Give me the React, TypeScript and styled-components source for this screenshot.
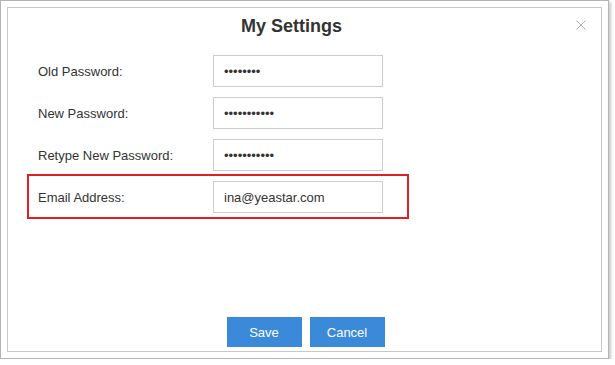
import React from "react";
import styled, { createGlobalStyle } from "styled-components";

const GlobalStyle = createGlobalStyle`
  html, body {
    margin: 0;
    padding: 0;
    background: #ffffff;
  }
  body {
    font-family: "Liberation Sans", Arial, sans-serif;
    color: #333333;
  }
`;

const Frame = styled.div`
  box-sizing: border-box;
  width: 609px;
  height: 359px;
  padding: 6px;
  background: #ffffff;
  border: 1px solid #b4b4b4;
  box-shadow: 2px 2px 3px rgba(0, 0, 0, 0.22);
`;

const Dialog = styled.div`
  position: relative;
  box-sizing: border-box;
  height: 100%;
  display: flex;
  flex-direction: column;
  border: 1px solid #c8c8c8;
  background: #ffffff;
`;

const Header = styled.div`
  box-sizing: border-box;
  height: 47px;
  padding: 8px 26px 0 0;
  text-align: center;
`;

const Title = styled.h2`
  margin: 0;
  font-size: 18px;
  line-height: 20px;
  font-weight: bold;
  color: #333333;
`;

const CloseButton = styled.button`
  position: absolute;
  top: 12px;
  right: 15px;
  width: 10px;
  height: 10px;
  padding: 0;
  border: 0;
  background: none;
  cursor: pointer;
  display: flex;
`;

const Form = styled.div`
  display: flex;
  flex-direction: column;
  gap: 10px;
  padding-left: 30px;
`;

const Row = styled.div<{ $highlight?: boolean }>`
  display: flex;
  align-items: center;
  ${({ $highlight }) =>
    $highlight &&
    `
    box-sizing: border-box;
    width: 382px;
    margin-top: -7px;
    margin-left: -11px;
    padding: 5px 0 4px 9px;
    border: 2px solid #e21f26;
  `}
`;

const Label = styled.label`
  width: 175px;
  font-size: 13px;
  color: #333333;
`;

const Field = styled.input`
  box-sizing: border-box;
  width: 170px;
  height: 32px;
  padding: 0 10px;
  border: 1px solid #cccccc;
  border-radius: 0;
  outline: none;
  font-family: "Liberation Sans", Arial, sans-serif;
  font-size: 13px;
  color: #333333;
  background: #ffffff;
`;

const Footer = styled.div`
  margin-top: auto;
  padding: 0 0 4px 2px;
  display: flex;
  justify-content: center;
  gap: 8px;
`;

const Button = styled.button`
  width: 75px;
  height: 30px;
  border: 0;
  border-radius: 0;
  background: #3a8ad9;
  color: #ffffff;
  font-family: "Liberation Sans", Arial, sans-serif;
  font-size: 13px;
  cursor: pointer;
`;

const fields = [
  { label: "Old Password:", type: "password", value: "abcdefgh" },
  { label: "New Password:", type: "password", value: "abcdefghijk" },
  { label: "Retype New Password:", type: "password", value: "abcdefghijk" },
  { label: "Email Address:", type: "text", value: "ina@yeastar.com", highlight: true },
];

const App = () => {
  return (
    <>
      <GlobalStyle />
      <Frame>
        <Dialog>
          <Header>
            <Title>My Settings</Title>
          </Header>
          <CloseButton aria-label="Close">
            <svg width="10" height="10" viewBox="0 0 10 10">
              <path d="M0.5 0.5 L9.5 9.5 M9.5 0.5 L0.5 9.5" stroke="#b0b0b0" strokeWidth="1" fill="none" />
            </svg>
          </CloseButton>
          <Form>
            {fields.map((f) => (
              <Row key={f.label} $highlight={f.highlight}>
                <Label>{f.label}</Label>
                <Field type={f.type} defaultValue={f.value} />
              </Row>
            ))}
          </Form>
          <Footer>
            <Button>Save</Button>
            <Button>Cancel</Button>
          </Footer>
        </Dialog>
      </Frame>
    </>
  );
};

export default App;
